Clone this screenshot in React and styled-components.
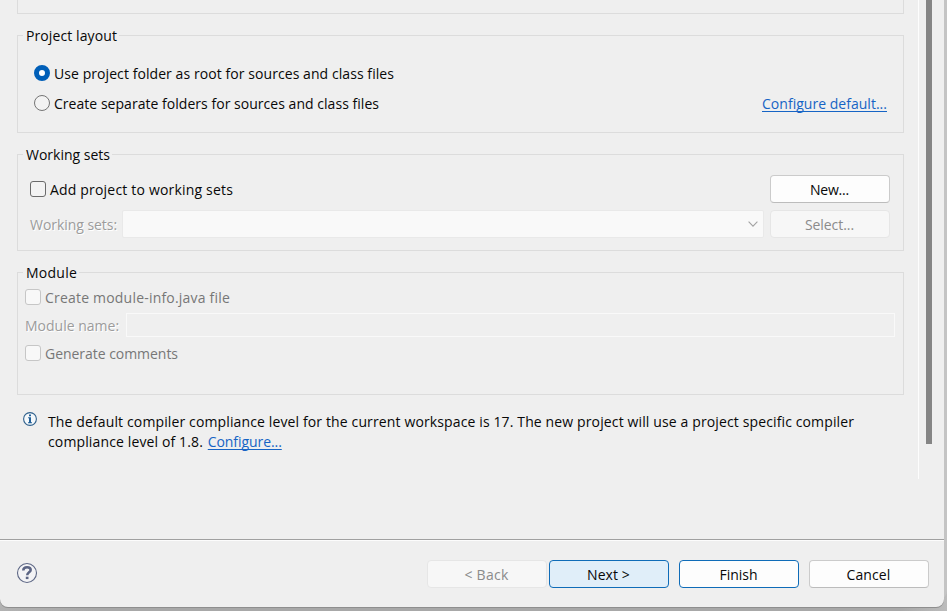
import React from "react";
import styled, { createGlobalStyle } from "styled-components";

const GlobalStyle = createGlobalStyle`
  * { box-sizing: border-box; }
  body {
    margin: 0;
    overflow: hidden;
    background: #b0b0b0;
    font: 14px/20px "Open Sans", "Noto Sans", sans-serif;
    color: #080808;
  }
`;

const Desktop = styled.div`
  height: 611px;
  background: linear-gradient(to right, #b2b2b2, #a8a8a8 10%, #a8a8a8 95%, #bcbcbc);
`;

const Dialog = styled.main`
  display: flex;
  flex-direction: column;
  width: 944px;
  height: 607px;
  background: #efefef;
  border-radius: 0 0 8px 8px;
  box-shadow: 0 1px 0 #8e8e8e, 3px -8px 0 #c4c4c4;
`;

const Body = styled.div`
  display: flex;
  height: 539px;
`;

const Content = styled.div`
  width: 919px;
  height: 479px;
  padding-left: 17px;
  border-right: 1px solid #fdfdfd;
`;

const Scrollbar = styled.div`
  width: 6px;
  height: 444px;
  margin-left: 7px;
  background: #858585;
`;

const Group = styled.fieldset`
  width: 887px;
  height: ${(p) => p.$height}px;
  margin: 0 0 ${(p) => p.$gap || 0}px;
  padding: 0;
  border: 1px solid #dcdcdc;
`;

const PreviousGroup = styled(Group)`
  border-top: 0;
`;

const GroupBody = styled.div`
  padding: ${(p) => p.$padding};
`;

const Legend = styled.legend`
  height: 21px;
  margin-left: 5px;
  padding: 0 2px 0 3px;
  line-height: 21px;
  letter-spacing: ${(p) => p.$spacing || 0}px;
`;

const Row = styled.div`
  display: flex;
  align-items: center;
  height: ${(p) => p.$height || 28}px;
  margin-bottom: ${(p) => p.$gap || 0}px;
`;

const Text = styled.span`
  padding-top: 2px;
  white-space: nowrap;
  color: ${(p) => (p.$disabled ? "#777" : "inherit")};
  letter-spacing: ${(p) => p.$spacing || 0}px;
`;

const EtchedText = styled(Text)`
  color: #9c9c9c;
  text-shadow: 1px 1px 0 #fff;
`;

const Radio = styled.span`
  width: 16px;
  height: 16px;
  margin-right: 4px;
  border: ${(p) => (p.$checked ? "5px solid #005fb8" : "1px solid #757575")};
  border-radius: 50%;
  background: ${(p) => (p.$checked ? "#fff" : "#f3f3f3")};
`;

const Checkbox = styled.span`
  width: 16px;
  height: 16px;
  margin-right: 4px;
  border: 1px solid ${(p) => (p.$disabled ? "#c6c6c6" : "#6b6b6b")};
  border-radius: 3px;
  background: ${(p) => (p.$disabled ? "#f8f8f8" : "#f3f3f3")};
`;

const Link = styled.a`
  margin-left: ${(p) => (p.$inline ? "1px" : "auto")};
  padding-top: ${(p) => (p.$inline ? 0 : 2)}px;
  color: #1664c5;
  text-decoration: underline;
  text-decoration-skip-ink: none;
  text-decoration-thickness: 1px;
  text-underline-offset: 2px;
  letter-spacing: ${(p) => p.$spacing || 0}px;
`;

const buttonKinds = {
  normal: { border: "#cbcbcb", bottom: "#bcbcbc", fill: "#fdfdfd", text: "#080808" },
  disabled: { border: "#e6e6e6", bottom: "#e6e6e6", fill: "#f7f7f7", text: "#8b8b8b" },
  focused: { border: "#0f6cb8", bottom: "#0f6cb8", fill: "#e0eef9", text: "#080808" },
  primary: { border: "#0f6cb8", bottom: "#0f6cb8", fill: "#fdfdfd", text: "#080808" },
};

const Button = styled.button`
  width: 120px;
  height: 28px;
  margin: 0 0 0 ${(p) => p.$gap || 0}px;
  padding: 1px 1px 0 0;
  border: 1px solid ${(p) => buttonKinds[p.$kind].border};
  border-bottom-color: ${(p) => buttonKinds[p.$kind].bottom};
  border-radius: 4px;
  background: ${(p) => buttonKinds[p.$kind].fill};
  color: ${(p) => buttonKinds[p.$kind].text};
  font: inherit;
  letter-spacing: ${(p) => p.$spacing || 0}px;
`;

const WizardButton = styled(Button)`
  padding-top: 3px;
`;

const Combo = styled.div`
  display: flex;
  align-items: center;
  justify-content: flex-end;
  width: 642px;
  height: 28px;
  padding-right: 5px;
  margin-left: auto;
  border: 1px solid #e9e9e9;
  border-radius: 2px;
  background: #f9f9f9;
`;

const NameField = styled.div`
  width: 769px;
  height: 24px;
  margin-left: auto;
  border: 1px solid #f9f9f9;
  background: #efefef;
`;

const Notice = styled.div`
  display: flex;
  padding: 16px 0 0 6px;
`;

const NoticeIcon = styled.svg`
  flex: none;
  margin: 1px 11px 0 0;
`;

const NoticeText = styled.p`
  margin: 1px 0 0;
  white-space: nowrap;
`;

const Line = styled.span`
  display: block;
  letter-spacing: ${(p) => p.$spacing}px;
`;

const Footer = styled.footer`
  display: flex;
  align-items: center;
  flex: 1;
  padding: 0 15px 0 16px;
  border-top: 1px solid #a0a0a0;
  box-shadow: inset 0 1px 0 #fcfcfc;
`;

const HelpGlyph = styled.svg`
  margin-bottom: 2px;
`;

const Actions = styled.div`
  display: flex;
  margin-left: auto;
`;

function InfoIcon() {
  return (
    <NoticeIcon width="14" height="14" viewBox="0 0 14 14" fill="none">
      <circle cx="7" cy="7" r="6.4" fill="#f4f8fb" stroke="#2f608c" strokeWidth="1.1" />
      <path d="M6 2.6h2v1.7H6zM5.1 5.3H8v4.9h1v1H5v-1h1V6.3h-.9z" fill="#215f98" />
    </NoticeIcon>
  );
}

function HelpIcon() {
  return (
    <HelpGlyph width="22" height="22" viewBox="0 0 22 22" fill="none">
      <circle cx="11" cy="11" r="9.5" fill="#f3f3f5" stroke="#5d6785" strokeWidth="1.1" />
      <path
        d="M7.3 8.6C7.3 6.3 8.9 5.2 11.1 5.2c2.2 0 3.6 1 3.6 2.8 0 2.4-3.5 2.4-3.5 5.3"
        stroke="#5c6584"
        strokeWidth="2.5"
      />
      <path d="M9.8 14.7h2.7v2.4H9.8z" fill="#5c6584" />
    </HelpGlyph>
  );
}

function Chevron() {
  return (
    <svg width="10" height="6" viewBox="0 0 10 6" fill="none" stroke="#a2a2a2" strokeWidth="1.1">
      <path d="M.6.7 5 5.1 9.4.7" />
    </svg>
  );
}

export default function App() {
  return (
    <>
      <GlobalStyle />
      <Desktop>
        <Dialog>
          <Body>
            <Content>
              <PreviousGroup $height={14} $gap={11} />
              <Group $height={108} $gap={11}>
                <Legend $spacing={0.1}>Project layout</Legend>
                <GroupBody $padding="12px 16px 0">
                  <Row $height={30}>
                    <Radio $checked />
                    <Text $spacing={0.071}>Use project folder as root for sources and class files</Text>
                  </Row>
                  <Row $height={30}>
                    <Radio />
                    <Text $spacing={0.033}>Create separate folders for sources and class files</Text>
                    <Link $spacing={0.023}>Configure default...</Link>
                  </Row>
                </GroupBody>
              </Group>
              <Group $height={107} $gap={11}>
                <Legend>Working sets</Legend>
                <GroupBody $padding="10px 13px 0 12px">
                  <Row $gap={7}>
                    <Checkbox />
                    <Text $spacing={0.185}>Add project to working sets</Text>
                    <Actions>
                      <Button $kind="normal" $spacing={-0.2}>New...</Button>
                    </Actions>
                  </Row>
                  <Row>
                    <EtchedText $spacing={-0.05}>Working sets:</EtchedText>
                    <Combo><Chevron /></Combo>
                    <Button $kind="disabled" $gap={6} $spacing={-0.07} disabled>Select...</Button>
                  </Row>
                </GroupBody>
              </Group>
              <Group $height={133}>
                <Legend $spacing={0.24}>Module</Legend>
                <GroupBody $padding="0 8px 0 7px">
                  <Row>
                    <Checkbox $disabled />
                    <Text $disabled $spacing={0.2}>Create module-info.java file</Text>
                  </Row>
                  <Row>
                    <EtchedText>Module name:</EtchedText>
                    <NameField />
                  </Row>
                  <Row>
                    <Checkbox $disabled />
                    <Text $disabled $spacing={-0.037}>Generate comments</Text>
                  </Row>
                </GroupBody>
              </Group>
              <Notice>
                <InfoIcon />
                <NoticeText>
                  <Line $spacing={0.128}>
                    The default compiler compliance level for the current workspace is 17. The new project will use a project specific compiler
                  </Line>
                  <Line $spacing={0.131}>
                    compliance level of 1.8. <Link $inline $spacing={-0.073}>Configure...</Link>
                  </Line>
                </NoticeText>
              </Notice>
            </Content>
            <Scrollbar />
          </Body>
          <Footer>
            <HelpIcon />
            <Actions>
              <WizardButton $kind="disabled" $spacing={0.246} disabled>{"< Back"}</WizardButton>
              <WizardButton $kind="focused" $gap={2} $spacing={0.1}>{"Next >"}</WizardButton>
              <WizardButton $kind="primary" $gap={10}>Finish</WizardButton>
              <WizardButton $kind="normal" $gap={10} $spacing={0.12}>Cancel</WizardButton>
            </Actions>
          </Footer>
        </Dialog>
      </Desktop>
    </>
  );
}
